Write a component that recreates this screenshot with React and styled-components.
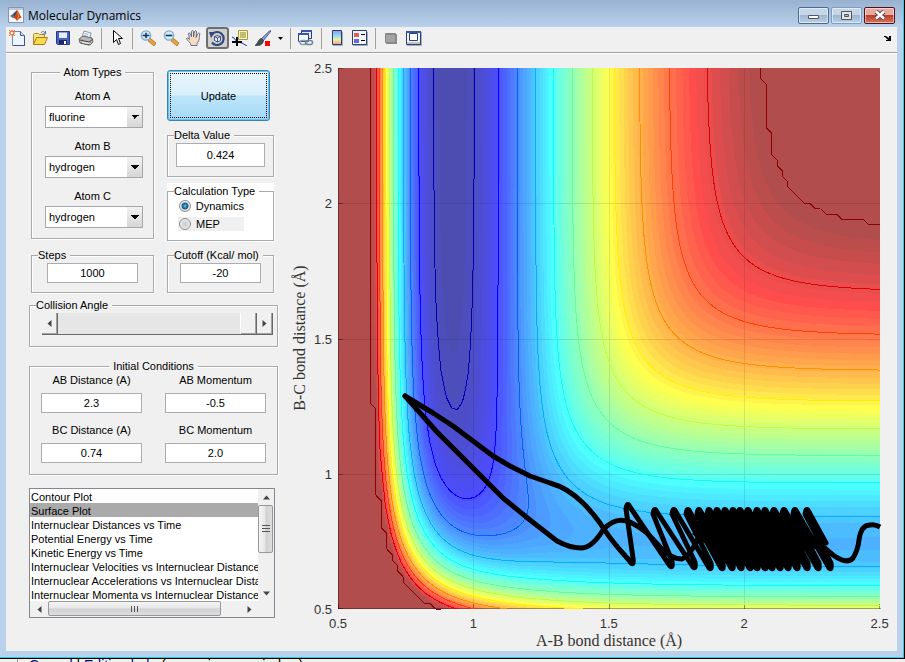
import React, {useState} from 'react';
import styled, {createGlobalStyle} from 'styled-components';

const GlobalStyle = createGlobalStyle`
    * {
        box-sizing: border-box;
    }
    body {
        margin: 0;
        overflow: hidden;
        background: #f0f0f0;
        font-family: "Liberation Sans", Arial, sans-serif;
        font-size: 11px;
        color: #000;
    }
    button, input, select {
        font: inherit;
        color: inherit;
    }
`;

/* ---------- potential energy surface (LEPS, collinear A-B-C) ---------- */

const HF = {d: 134, b: 2.27, r: 0.921};
const HH = {d: 103.5, b: 1.98, r: 0.741};
const K = 0.424 * 0.424;
const CUTOFF = -20;
const NODES = 101;
const PLOT = {x: 53, y: 14, w: 542, h: 541};

function integrals(p, r) {
    const y = Math.exp(-p.b * (r - p.r));
    return {
        q: (p.d / 4) * ((3 + K) * y * y - (2 + 6 * K) * y),
        j: (p.d / 4) * ((1 + 3 * K) * y * y - (6 + 2 * K) * y),
    };
}

function potential(ab, bc) {
    const a = integrals(HF, ab);
    const b = integrals(HH, bc);
    const c = integrals(HF, ab + bc);
    const root = Math.sqrt(((a.j - b.j) ** 2 + (b.j - c.j) ** 2 + (c.j - a.j) ** 2) / 2);
    return Math.min(CUTOFF, (a.q + b.q + c.q - root) / (1 + K));
}

// row 0 is the largest B-C distance, the top of the plot
const grid = [];
for (let i = 0; i < NODES; i++) {
    const row = [];
    for (let k = 0; k < NODES; k++) {
        row.push(potential(0.5 + k * 0.02, 2.5 - i * 0.02));
    }
    grid.push(row);
}
const lowest = Math.min(...grid.map(row => Math.min(...row)));

function ramp(i) {
    if (i < 1 || i > 47) return 0;
    if (i <= 16) return i / 16;
    return i <= 31 ? 1 : (48 - i) / 16;
}

function jet(value) {
    const part = Math.floor(((value - lowest) / (CUTOFF - lowest)) * 63);
    const i = Math.min(63, Math.max(1, part + 1));
    return [ramp(i - 24), ramp(i - 8), ramp(i + 8)];
}

function rgb(color, alpha) {
    return `rgb(${color.map(c => Math.round(255 * (c * alpha + 1 - alpha))).join(',')})`;
}

function surface() {
    const paths = {};
    for (let y = 0; y < PLOT.h; y++) {
        const gy = ((y + 0.5) / PLOT.h) * (NODES - 1);
        const i = Math.floor(gy);
        const fy = gy - i;
        let start = 0;
        let last = null;
        for (let x = 0; x <= PLOT.w; x++) {
            let fill = null;
            if (x < PLOT.w) {
                const gx = ((x + 0.5) / PLOT.w) * (NODES - 1);
                const k = Math.floor(gx);
                const fx = gx - k;
                const top = grid[i][k] * (1 - fx) + grid[i][k + 1] * fx;
                const low = grid[i + 1][k] * (1 - fx) + grid[i + 1][k + 1] * fx;
                fill = rgb(jet(top * (1 - fy) + low * fy), 0.7);
            }
            if (fill !== last) {
                if (last) {
                    paths[last] = (paths[last] || '') + `M${start} ${y}h${x - start}v1h${start - x}z`;
                }
                last = fill;
                start = x;
            }
        }
    }
    return Object.entries(paths);
}

// marching squares on the node grid
function contour(level) {
    const sx = PLOT.w / (NODES - 1);
    const sy = PLOT.h / (NODES - 1);
    let d = '';
    for (let i = 0; i < NODES - 1; i++) {
        for (let k = 0; k < NODES - 1; k++) {
            const corners = [[k, i], [k + 1, i], [k + 1, i + 1], [k, i + 1]];
            const hits = [];
            corners.forEach((p, n) => {
                const q = corners[(n + 1) % 4];
                const vp = grid[p[1]][p[0]];
                const vq = grid[q[1]][q[0]];
                if ((vp >= level) !== (vq >= level)) {
                    const t = (level - vp) / (vq - vp);
                    hits.push([(p[0] + (q[0] - p[0]) * t) * sx, (p[1] + (q[1] - p[1]) * t) * sy]);
                }
            });
            for (let n = 0; n + 1 < hits.length; n += 2) {
                d += `M${hits[n].map(v => v.toFixed(2)).join(' ')}L${hits[n + 1].map(v => v.toFixed(2)).join(' ')}`;
            }
        }
    }
    return d;
}

const SURFACE = surface();
const CONTOURS = [];
for (let level = -130; level <= CUTOFF; level += 10) {
    CONTOURS.push({d: contour(level), color: rgb(jet(level), 1)});
}

/* ---------- trajectory ---------- */

const TURN_IN = [295, 334, 357, 373, 385, 395, 404, 413, 420, 428, 435, 443, 451, 460, 470, 481, 493];
const TURN_OUT = [289, 316, 335, 349, 360, 370, 378, 386, 394, 401, 409, 418, 426, 435, 445, 456, 468];

const approach = 'M67 328L95 345L115 358L135 373L155 388L172 398Q182 403 192 408L212 415Q230 420 245 435'
    + 'Q254 444 262 455Q270 468 282 482L290 491';
const swings = 'M290 491'
    + TURN_IN.map((x, n) => {
        const low = n === 0 ? 497 : Math.min(502, 499 + n);
        const high = n === 0 ? 435 : 440;
        return `L${x - 2} ${low - 2}Q${x + 1} ${low + 1} ${x} ${low - 7}`
            + `L${TURN_OUT[n] - 1} ${high + 6}Q${TURN_OUT[n]} ${high - 2} ${TURN_OUT[n] + 3} ${high + 4}`;
    }).join('')
    + 'L488 475';
const leave = 'M67 328L99 364L135 400L165 430L192 452L219 473Q232 480 243 480Q254 480 265 462Q277 448 292 454'
    + 'Q302 459 309 465L325 482Q334 491 344 491Q352 488 359 472L369 460';
const tail = 'M483 477L495 487Q509 497 515 490Q520 482 521 472Q523 457 532 457Q537 456 542 459';
const bundle = 'M354 466L364 454L380 450L399 447L419 449L439 454L459 461L474 466L487 478L476 481L458 484L443 489'
    + 'L424 493L405 493L390 487L378 479L364 474z';

const ChartBox = styled.div`
    flex: 1;
    min-width: 0;
`;
const ChartSvg = styled.svg`
    display: block;
    width: 100%;
    height: auto;
`;
const TickText = styled.text`
    font: 13px "Liberation Sans", Arial, sans-serif;
    fill: #333;
    text-anchor: ${p => p.$anchor};
`;
const AxisTitle = styled.text`
    font: 16px "Liberation Serif", "Times New Roman", serif;
    fill: #333;
    text-anchor: middle;
`;

function Chart() {
    const ticks = [0, 1, 2, 3, 4];
    return (
        <ChartBox>
            <ChartSvg viewBox="0 0 612 597">
                <g transform={`translate(${PLOT.x} ${PLOT.y})`}>
                    <g shapeRendering="crispEdges">
                        {SURFACE.map(([fill, d]) => <path key={fill} d={d} fill={fill} />)}
                        {ticks.slice(1, 4).map(n => (
                            <path key={n} d={`M${Math.round(n * 135.4)}.5 0v541M0 ${Math.round(n * 135.25)}.5h542`} stroke="#000" strokeOpacity="0.1" />
                        ))}
                        <path d="M0.5 0v540.5h542" fill="none" stroke="#000" strokeOpacity="0.35" />
                        {ticks.map(n => (
                            <path key={n} d={`M${Math.min(541, Math.round(n * 135.4))}.5 536v5M0 ${Math.min(540, Math.round(n * 135.25))}.5h5`} stroke="#000" strokeOpacity="0.35" />
                        ))}
                        {CONTOURS.map(c => <path key={c.color} d={c.d} stroke={c.color} fill="none" />)}
                    </g>
                    <g fill="none" stroke="#000" strokeWidth="5" strokeLinejoin="round" strokeLinecap="round">
                        <path d={approach} />
                        <path d={swings} />
                        <path d={leave} />
                        <path d={tail} strokeLinecap="butt" />
                        <path d={bundle} fill="#000" stroke="none" />
                    </g>
                </g>
                {ticks.map(n => (
                    <g key={n}>
                        <TickText $anchor="middle" x={PLOT.x + n * 135.4} y="574">{0.5 + n * 0.5}</TickText>
                        <TickText $anchor="end" x="47" y={560 - n * 135.25}>{0.5 + n * 0.5}</TickText>
                    </g>
                ))}
                <AxisTitle x="324" y="592">A-B bond distance (Å)</AxisTitle>
                <AxisTitle transform="translate(20 284) rotate(-90)">B-C bond distance (Å)</AxisTitle>
            </ChartSvg>
        </ChartBox>
    );
}

/* ---------- window frame ---------- */

const Frame = styled.div`
    border: solid #b9d1ea;
    border-width: 0 6px 6px;
    background: #f0f0f0;
`;
const Edge = styled.div`
    border-right: 1px solid #000;
    border-bottom: 1px solid #000;
    background: #35c5dc;
    padding: 0 1px 1px 0;
`;
const TitleBar = styled.header`
    display: flex;
    align-items: center;
    height: 27px;
    margin: 0 -6px;
    padding: 3px 8px 0;
    background: linear-gradient(#98b2d1, #b9d1ea);
`;
const Title = styled.h1`
    flex: 1;
    margin: 0 0 0 4px;
    font: 12px "Open Sans", "Noto Sans", sans-serif;
`;
const Caption = styled.div`
    display: flex;
    gap: 2px;
`;
const CaptionButton = styled.button`
    display: flex;
    align-items: center;
    justify-content: center;
    width: 31px;
    height: 17px;
    padding: 0;
    border: 1px solid ${p => (p.$close ? '#4c1220' : p.$dim ? '#7f9dc0' : '#4f6a8a')};
    border-radius: 2px;
    box-shadow: inset 0 0 0 1px rgba(255, 255, 255, 0.5);
    background: ${p => (p.$close
        ? 'linear-gradient(#e9a99d 0 45%, #b93f2a 50%, #d6745a)'
        : 'linear-gradient(#c5d6e9 0 45%, #9db7d3 50%, #bad0e8)')};
`;
const ToolBar = styled.div`
    display: flex;
    align-items: center;
    height: 27px;
    padding-bottom: 4px;
    border-bottom: 1px solid #fff;
    box-shadow: inset 0 -1px 0 #a0a0a0;
`;
const Tool = styled.button`
    display: flex;
    align-items: center;
    justify-content: center;
    width: ${p => (p.$narrow ? 12 : 23)}px;
    height: 22px;
    padding: 0 1px 0 0;
    border: ${p => (p.$on ? '2px solid #6e6e6e' : '0')};
    border-radius: 3px;
    background: ${p => (p.$on ? '#cfcfcf' : 'transparent')};
`;
const Separator = styled.i`
    width: 1px;
    height: 21px;
    margin: 0 4px 0 3px;
    background: #a0a0a0;
`;
const DockButton = styled(Tool)`
    width: 17px;
    margin-left: auto;
`;
const Footer = styled.footer`
    height: 6px;
    overflow: hidden;
    margin-left: 17px;
    padding-left: 11px;
    border-left: 1px solid #999;
    font-size: 14px;
    line-height: 12px;
    white-space: nowrap;
`;
const FooterLink = styled.a`
    color: #0b0080;
    text-decoration: none;
`;

const IconSvg = styled.svg`
    flex: none;
`;
const Icon = ({size = 16, children}) => (
    <IconSvg width={size} height={size} viewBox={`0 0 ${size} ${size}`} aria-hidden="true">{children}</IconSvg>
);

const MatlabIcon = () => (
    <Icon>
        <path d="M0.5 0.5h15v15h-15z" fill="#f4f6f9" stroke="#8296ae" />
        <path d="M1 1h14v2H1z" fill="#bccbdc" />
        <path d="M2 9l3-2 2 2-2 2z" fill="#3a78a8" />
        <path d="M5 7l4-4v5l-2 3z" fill="#264a6b" />
        <path d="M9 3c2 2 3 6 5 8-2-1-3 1-5 3-1-2-2-3-4-3 2-2 3-5 4-8z" fill="#c8451b" />
        <path d="M9 3l1 6-1 5 1-2 1-3z" fill="#f2a035" />
    </Icon>
);

const NewIcon = () => (
    <Icon>
        <path d="M3.5 1.5h8l4 4v10h-12z" fill="#eef5fd" stroke="#6d88b4" />
        <path d="M11.5 1.5v4h4" fill="#c2d5ee" stroke="#3f62a0" />
        <path d="M15.5 6v9.5H4" fill="none" stroke="#34558e" />
        <path d="M0 0h1v1H0zM5 0h1v1H5zM0 5h1v1H0zM5 5h1v1H5z" fill="#e2703a" />
        <circle cx="3" cy="3" r="2" fill="#fff4d8" stroke="#e2703a" strokeWidth="1.3" />
    </Icon>
);
const OpenIcon = () => (
    <Icon>
        <path d="M1.5 14.5v-10l1-1h4l1 1h5v3" fill="#f8e58a" stroke="#b48a18" />
        <path d="M1.5 14.5l3-7h11l-3 7z" fill="#f9d94e" stroke="#a87c10" />
        <path d="M9 3c1-2 3-2 4 0M13.5 1v3h-3" fill="none" stroke="#4a6fa8" />
    </Icon>
);
const SaveIcon = () => (
    <Icon>
        <path d="M1.5 1.5h13v13h-12l-1-1z" fill="#4661c4" stroke="#27398a" />
        <path d="M4 2h8v6H4z" fill="#e7eefb" />
        <path d="M4 2h8v1H4z" fill="#8fa4e4" />
        <path d="M4 10h8v4H4z" fill="#1e2a58" />
        <path d="M9 11h2v3H9z" fill="#fff" />
    </Icon>
);
const PrintIcon = () => (
    <Icon>
        <path d="M4 7l2-6 7 2-1 5z" fill="#f5f8fc" stroke="#8a97a8" />
        <path d="M6.5 3.5l4 1M6 5.5l4 1" stroke="#8db0df" />
        <path d="M1 9l4-3 9 2 1 4-3 3-10-2z" fill="#b9b9b5" stroke="#6a6a66" />
        <path d="M2 10l9 2 4-3M3 13l8 2" fill="none" stroke="#4b4b48" />
        <path d="M4 12l7 1v1l-7-1z" fill="#fff" />
        <path d="M12 12h1v1h-1z" fill="#6abf4b" />
    </Icon>
);
const PointerIcon = () => (
    <Icon>
        <path d="M4.5 0.5v12l3-3 2 5 2-1-2-5h4z" fill="#fff" stroke="#000" />
    </Icon>
);
const ZoomIcon = ({plus}) => (
    <Icon>
        <path d="M9 9l1-1 6 5-2 3-6-5z" fill="#e9a23b" stroke="#a96a14" strokeWidth="0.7" />
        <circle cx="6" cy="5.5" r="4.6" fill="#d4ecf8" stroke="#80abd2" strokeWidth="1.4" />
        <path d={plus ? 'M3 5h6v1H3zM5.5 3h1v5h-1z' : 'M3 5h6v1H3z'} fill="#14386c" stroke="#14386c" strokeWidth="0.6" />
    </Icon>
);
const HandIcon = () => (
    <Icon>
        <path d="M5 15.5c0-3-4-5-4.5-7 .5-1 2-.5 3 1L2.5 4c0-1.5 1.5-1.5 2 0l1 3V1.7c0-1.5 2-1.5 2 0V7l1-5.500c.5-1.300 2-1 2 .5L10 7.5l2-4c.8-1 2-.5 1.700.7-.5 2.500.3 6-2.700 9v2.300z" fill="#f9dcc0" stroke="#54698f" strokeWidth="0.9" />
    </Icon>
);
const RotateIcon = () => (
    <Icon>
        <path d="M3 4.5A6.5 6.5 0 1 1 3 12.5" fill="none" stroke="#33487c" strokeWidth="2.2" />
        <path d="M0 2l6 0-4 6z" fill="#33487c" />
        <path d="M5.5 6.5l3-1 3 1v4l-3 1.5-3-1.5zM5.5 6.5l3 1.5 3-1.5M8.5 8v4" fill="#e6ebf5" stroke="#33487c" strokeWidth="0.9" />
    </Icon>
);
const DataCursorIcon = () => (
    <Icon>
        <path d="M6.5 0.5h9v9h-9z" fill="#fbf6b4" stroke="#a39d3c" />
        <path d="M8 3h6M8 5h6M8 7h6" stroke="#8a8330" />
        <path d="M0 7l2 1 3 4 5 1 5 3" fill="none" stroke="#2424d8" />
        <path d="M0 11h10v2H0zM4 7h2v9H4z" fill="#000" />
    </Icon>
);
const BrushIcon = () => (
    <Icon>
        <path d="M15 0.5L6.5 8.5l2 2L16 1z" fill="#8fa0d6" stroke="#38457c" strokeWidth="0.8" />
        <path d="M6.5 8.5c-3 0-3 4-6.5 7 3 .5 8 0 8.5-5z" fill="#4a4d55" stroke="#24262b" strokeWidth="0.6" />
        <path d="M10 11h5v5h-5z" fill="#f00" />
    </Icon>
);
const LinkIcon = () => (
    <Icon>
        <path d="M3.5 0.5h10v8h-10z" fill="#dfe9f7" stroke="#2c3f7c" />
        <path d="M3 0h11v2H3z" fill="#3a56a8" />
        <path d="M0.5 3.5h10v8h-10z" fill="#f4f8fd" stroke="#2c3f7c" />
        <path d="M0 3h11v2H0z" fill="#3a56a8" />
        <rect x="2" y="10.5" width="7" height="4" rx="2" fill="none" stroke="#8ba3b3" strokeWidth="1.5" />
        <rect x="7.5" y="10.5" width="7" height="4" rx="2" fill="none" stroke="#6b8799" strokeWidth="1.5" />
    </Icon>
);
const ColorbarIcon = () => (
    <Icon>
        <defs>
            <linearGradient id="bar" x1="0" y1="0" x2="0" y2="1">
                <stop offset="0" stopColor="#a58be8" />
                <stop offset="0.35" stopColor="#8adcf2" />
                <stop offset="0.65" stopColor="#f1f09a" />
                <stop offset="1" stopColor="#f19c92" />
            </linearGradient>
        </defs>
        <path d="M4 2h10v14H4z" fill="#a9adb8" />
        <path d="M3.5 0.5h9v14h-9z" fill="url(#bar)" stroke="#27407c" />
    </Icon>
);
const LegendIcon = () => (
    <Icon>
        <path d="M1 2h15v14H1z" fill="#a9adb8" />
        <path d="M0.5 0.5h14v14h-14z" fill="#f4f8fd" stroke="#27407c" />
        <path d="M2 3h5v4H2z" fill="#e0605c" />
        <path d="M2 9h5v4H2z" fill="#6466e0" />
        <path d="M9 4h4v1H9zM9 10h4v1H9z" fill="#000" />
    </Icon>
);
const HideIcon = () => (
    <Icon>
        <path d="M3 4h11v10H3z" fill="#8b8b8b" />
        <path d="M3 5h9v7H3z" fill="#a3a3a3" />
        <path d="M2.5 3.5h10v9h-10z" fill="none" stroke="#858585" />
    </Icon>
);
const ShowIcon = () => (
    <Icon>
        <path d="M1 2h15v14H1z" fill="#a9adb8" />
        <path d="M0.5 1.5h14v13h-14z" fill="#f2f2ee" stroke="#27407c" />
        <path d="M1 12h13v2H1z" fill="#c4c4ba" />
        <path d="M0 1h15v2H0z" fill="#3a56a8" />
        <path d="M3.5 3.5h8v7h-8z" fill="#fff" stroke="#27407c" />
    </Icon>
);

const tools = [
    ['New', <NewIcon />], ['Open', <OpenIcon />], ['Save', <SaveIcon />], ['Print', <PrintIcon />], null,
    ['Edit plot', <PointerIcon />], null,
    ['Zoom in', <ZoomIcon plus />], ['Zoom out', <ZoomIcon />], ['Pan', <HandIcon />], ['Rotate 3D', <RotateIcon />],
    ['Data cursor', <DataCursorIcon />], ['Brush', <BrushIcon />],
    ['Brush menu', <Icon size={5}><path d="M0 1h5L2.5 4z" fill="#000" /></Icon>], null,
    ['Link plot', <LinkIcon />], null,
    ['Colorbar', <ColorbarIcon />], ['Legend', <LegendIcon />], null,
    ['Hide tools', <HideIcon />], ['Show tools', <ShowIcon />],
];

/* ---------- panels ---------- */

const Body = styled.main`
    display: flex;
    align-items: flex-start;
`;
const Sidebar = styled.form`
    flex: none;
    width: 279px;
    padding: 10px 7px 0 23px;
`;
const Columns = styled.div`
    display: grid;
    grid-template-columns: 123px 107px;
    justify-content: space-between;
    padding: 0 4px 0 2px;
`;
const Column = styled.div`
    display: flex;
    flex-direction: column;
    gap: ${p => p.$gap}px;
    padding-top: ${p => p.$top || 0}px;
`;
const Panel = styled.fieldset`
    min-width: 0;
    height: ${p => p.$height}px;
    margin: ${p => p.$top || 0}px 0 0;
    padding: 0 ${p => p.$pad}px;
    border: 1px solid #aaa;
    box-shadow: 1px 1px 0 #fff, inset 1px 1px 0 #fff;
    background: ${p => (p.$white ? '#fff' : 'none')};
`;
const WhiteBox = styled.div`
    background: #fff;
`;
const Legend = styled.legend`
    margin: 0 ${p => (p.$center ? 'auto' : 0)};
    margin-left: ${p => (p.$center ? 'auto' : `${6 - p.$pad}px`)};
    padding: 1px 4px 0 ${p => (p.$center ? 4 : 0)}px;
    line-height: 15px;
    white-space: nowrap;
    background: ${p => (p.$white ? '#fff' : '#f0f0f0')};
`;
const Label = styled.label`
    display: block;
    line-height: 16px;
    margin-top: ${p => p.$top || 0}px;
    text-align: center;
`;
const Picker = styled.div`
    position: relative;
    height: 22px;
    margin: 2px -2px 0 1px;
    &::after {
        content: "";
        position: absolute;
        top: 1px;
        right: 1px;
        bottom: 1px;
        width: 15px;
        background:
            conic-gradient(from -45deg at 50% 100%, #000 90deg, transparent 0) center / 8px 4px no-repeat,
            linear-gradient(#f2f2f2, #d6d6d6);
        pointer-events: none;
    }
`;
const PickerSelect = styled.select`
    width: 100%;
    height: 22px;
    padding: 0 3px;
    appearance: none;
    border: 1px solid #a6a6ac;
    border-radius: 0;
    background: #fff;
`;
const Field = styled.input`
    display: block;
    width: 100%;
    height: 20px;
    padding: 0;
    border: 1px solid #abadb3;
    border-radius: 0;
    background: #fff;
    text-align: center;
`;
const TallField = styled(Field)`
    height: 24px;
`;
const UpdateButton = styled.button`
    height: 51px;
    margin-right: 4px;
    border: 1px solid #3c7fb1;
    border-radius: 3px;
    outline: 1px dotted #000;
    outline-offset: -4px;
    box-shadow: inset 0 0 0 1px #5fc5ee;
    background: linear-gradient(#e9f5fc, #d9effb 48%, #bce5fc 52%, #a6d9f4);
`;
const Choice = styled.label`
    display: flex;
    align-items: center;
    gap: 5px;
    width: 66px;
    height: 14px;
    margin-bottom: 4px;
    background: ${p => (p.$shaded ? '#f0f0f0' : 'none')};
`;
const Radio = styled.input`
    appearance: none;
    width: 12px;
    height: 12px;
    margin: 0 0 0 1px;
    border: 1px solid #8e8f8f;
    border-radius: 50%;
    background: radial-gradient(#c8ccd0, #f4f4f4);
    &:checked {
        background: radial-gradient(#5cc6ee 0, #16527c 3px, #e8eef2 4px);
    }
`;
const SliderRow = styled.div`
    display: flex;
    height: 22px;
    margin: 0 -4px 0 4px;
    border-bottom: 1px solid #696969;
    background: #e6e6e6;
`;
const ArrowButton = styled.button`
    display: flex;
    align-items: center;
    justify-content: center;
    width: 16px;
    padding: 0;
    border: 0;
    border-right: 1px solid #696969;
    box-shadow: inset -1px -1px 0 #a0a0a0;
    background: #f0f0f0;
`;
const Slider = styled.input`
    flex: 1;
    min-width: 0;
    height: 21px;
    margin: 0;
    appearance: none;
    background: #e6e6e6;
    &::-webkit-slider-thumb {
        appearance: none;
        width: 17px;
        height: 21px;
        border: 0;
        border-left: 1px solid #fff;
        border-right: 1px solid #696969;
        box-shadow: inset -1px -1px 0 #a0a0a0;
        background: #f0f0f0;
    }
`;
const Pairs = styled.div`
    display: grid;
    grid-template-columns: 101px 101px;
    justify-content: space-between;
    row-gap: 9px;
    margin-top: -2px;
`;
const PairField = styled(Field)`
    margin-top: 5px;
`;
const ListBox = styled.div`
    display: grid;
    grid-template-columns: minmax(0, 1fr) 16px;
    grid-template-rows: 112px 16px;
    width: 246px;
    height: 130px;
    margin-top: 13px;
    border: 1px solid #828790;
    background: #f0f0f0;
`;
const List = styled.select`
    height: 112px;
    padding: 0;
    border: 0;
    border-radius: 0;
    outline: 0;
    background: #fff;
    overflow: hidden;
    scrollbar-width: none;
`;
const Item = styled.option`
    height: 14px;
    min-height: 14px;
    padding: 2px 1px 0;
    line-height: 14px;
    color: #000;
    &:checked {
        color: #000;
        background: #aaa linear-gradient(#aaa, #aaa);
    }
`;
const ScrollBar = styled.div`
    display: flex;
    flex-direction: ${p => (p.$vertical ? 'column' : 'row')};
    background: #f0f0f0;
`;
const ScrollButton = styled.button`
    display: flex;
    align-items: center;
    justify-content: center;
    width: ${p => (p.$wide || 16)}px;
    height: 16px;
    padding: 0;
    border: 0;
    background: none;
`;
const Thumb = styled.div`
    display: flex;
    align-items: center;
    justify-content: center;
    width: ${p => (p.$vertical ? 15 : 173)}px;
    height: ${p => (p.$vertical ? 48 : 15)}px;
    margin-bottom: ${p => (p.$vertical ? 'auto' : 0)};
    margin-right: ${p => (p.$vertical ? 0 : 'auto')};
    border: 1px solid #979797;
    border-radius: 2px;
    background: linear-gradient(${p => (p.$vertical ? '90deg' : '180deg')}, #f5f5f5, #e6e6e6 48%, #d0d0d3 52%, #dedee0);
`;

const turns = {up: 0, right: 90, down: 180, left: 270};
const Arrow = ({to, size = 7}) => (
    <svg width={size} height={size} viewBox="0 0 7 7" aria-hidden="true">
        <path d="M0 5.5h7L3.5 1.5z" fill="#444" transform={`rotate(${turns[to]} 3.5 3.5)`} />
    </svg>
);
const Grip = ({vertical}) => (
    <svg width="8" height="8" viewBox="0 0 8 8" aria-hidden="true">
        <path d={vertical ? 'M0 0.5h8M0 3.5h8M0 6.5h8' : 'M0.5 1v6M3.5 1v6M6.5 1v6'} stroke="#555" />
    </svg>
);

const plots = [
    'Contour Plot',
    'Surface Plot',
    'Internuclear Distances vs Time',
    'Potential Energy vs Time',
    'Kinetic Energy vs Time',
    'Internuclear Velocities vs Internuclear Distance',
    'Internuclear Accelerations vs Internuclear Distance',
    'Internuclear Momenta vs Internuclear Distance',
];

function AtomPicker({name, value, top}) {
    return (
        <>
            <Label htmlFor={name} $top={top}>{name}</Label>
            <Picker>
                <PickerSelect id={name} defaultValue={value}>
                    <option>fluorine</option>
                    <option>hydrogen</option>
                </PickerSelect>
            </Picker>
        </>
    );
}

function Pair({name, value}) {
    return (
        <div>
            <Label htmlFor={name}>{name}</Label>
            <PairField id={name} defaultValue={value} />
        </div>
    );
}

function Controls() {
    const [type, setType] = useState('Dynamics');

    return (
        <Sidebar onSubmit={e => e.preventDefault()}>
            <Columns>
                <Column $gap={8}>
                    <Panel $height={175} $pad={12}>
                        <Legend $center>Atom Types</Legend>
                        <AtomPicker name="Atom A" value="fluorine" top={8} />
                        <AtomPicker name="Atom B" value="hydrogen" top={10} />
                        <AtomPicker name="Atom C" value="hydrogen" top={10} />
                    </Panel>
                    <Panel $height={46} $pad={15}>
                        <Legend $pad={15}><label htmlFor="steps">Steps</label></Legend>
                        <Field id="steps" defaultValue="1000" />
                    </Panel>
                </Column>
                <Column $gap={6} $top={6}>
                    <UpdateButton>Update</UpdateButton>
                    <Panel $height={50} $pad={8}>
                        <Legend $pad={8}><label htmlFor="delta">Delta Value</label></Legend>
                        <TallField id="delta" defaultValue="0.424" />
                    </Panel>
                    <WhiteBox>
                        <Panel $height={58} $pad={10} $white>
                            <Legend $pad={10} $white>Calculation Type</Legend>
                            {['Dynamics', 'MEP'].map(name => (
                                <Choice key={name} $shaded={name === 'MEP'}>
                                    <Radio type="radio" name="type" checked={type === name} onChange={() => setType(name)} />
                                    {name}
                                </Choice>
                            ))}
                        </Panel>
                    </WhiteBox>
                    <Panel $height={46} $pad={12}>
                        <Legend $pad={12}><label htmlFor="cutoff">Cutoff (Kcal/ mol)</label></Legend>
                        <Field id="cutoff" defaultValue="-20" />
                    </Panel>
                </Column>
            </Columns>
            <Panel $height={50} $pad={8} $top={4}>
                <Legend $pad={8}><label htmlFor="angle">Collision Angle</label></Legend>
                <SliderRow>
                    <ArrowButton type="button" aria-label="Decrease angle"><Arrow to="left" /></ArrowButton>
                    <Slider id="angle" type="range" min="0" max="180" defaultValue="180" />
                    <ArrowButton type="button" aria-label="Increase angle"><Arrow to="right" /></ArrowButton>
                </SliderRow>
            </Panel>
            <Panel $height={117} $pad={11} $top={11}>
                <Legend $center>Initial Conditions</Legend>
                <Pairs>
                    <Pair name="AB Distance (A)" value="2.3" />
                    <Pair name="AB Momentum" value="-0.5" />
                    <Pair name="BC Distance (A)" value="0.74" />
                    <Pair name="BC Momentum" value="2.0" />
                </Pairs>
            </Panel>
            <ListBox>
                <List size={8} defaultValue="Surface Plot" aria-label="Plot type">
                    {plots.map(name => <Item key={name}>{name}</Item>)}
                </List>
                <ScrollBar $vertical>
                    <ScrollButton type="button" aria-label="Scroll up"><Arrow to="up" /></ScrollButton>
                    <Thumb $vertical><Grip vertical /></Thumb>
                    <ScrollButton type="button" aria-label="Scroll down"><Arrow to="down" /></ScrollButton>
                </ScrollBar>
                <ScrollBar>
                    <ScrollButton type="button" $wide={18} aria-label="Scroll left"><Arrow to="left" /></ScrollButton>
                    <Thumb><Grip /></Thumb>
                    <ScrollButton type="button" $wide={18} aria-label="Scroll right"><Arrow to="right" /></ScrollButton>
                </ScrollBar>
            </ListBox>
        </Sidebar>
    );
}

function App() {
    return (
        <>
            <GlobalStyle />
            <Edge>
                <Frame>
                    <TitleBar>
                        <MatlabIcon />
                        <Title>Molecular Dynamics</Title>
                        <Caption>
                            <CaptionButton aria-label="Minimize">
                                <svg width="11" height="12"><path d="M0.5 6.5h10v3h-10z" fill="#fff" stroke="#53565c" /></svg>
                            </CaptionButton>
                            <CaptionButton aria-label="Maximize" $dim>
                                <svg width="11" height="9"><path d="M0.5 0.5h10v8h-10z" fill="#e4e4e4" stroke="#53565c" /><path d="M3.5 3.5h4v2h-4z" fill="#9db7d3" stroke="#53565c" /></svg>
                            </CaptionButton>
                            <CaptionButton aria-label="Close" $close>
                                <svg width="12" height="10"><path d="M2 1.5l8 7M10 1.5l-8 7" stroke="#53444c" strokeWidth="4.5" /><path d="M2 1.5l8 7M10 1.5l-8 7" stroke="#fff" strokeWidth="2.5" /></svg>
                            </CaptionButton>
                        </Caption>
                    </TitleBar>
                    <ToolBar>
                        {tools.map((tool, n) => (tool
                            ? <Tool key={n} aria-label={tool[0]} $on={tool[0] === 'Rotate 3D'} $narrow={tool[0] === 'Brush menu'}>{tool[1]}</Tool>
                            : <Separator key={n} />
                        ))}
                        <DockButton aria-label="Dock">
                            <svg width="8" height="6"><path d="M0 1h2l3 2V1h2v5H2V5h2L1 2H0z" fill="#000" /></svg>
                        </DockButton>
                    </ToolBar>
                    <Body>
                        <Controls />
                        <Chart />
                    </Body>
                </Frame>
            </Edge>
            <Footer>
                <FooterLink href="#cancel">Cancel</FooterLink> | <FooterLink href="#help">Editing help</FooterLink> (opens in new window)
            </Footer>
        </>
    );
}

export default App;
